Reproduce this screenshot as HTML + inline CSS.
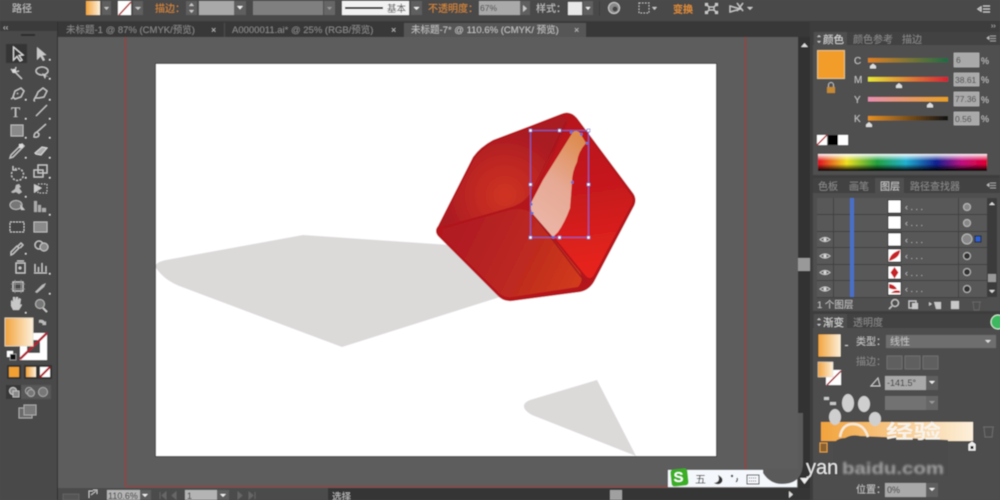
<!DOCTYPE html>
<html><head><meta charset="utf-8"><style>
html,body{margin:0;padding:0;width:1000px;height:500px;overflow:hidden;background:#4a4a4a}
svg{display:block}
text{font-family:"Liberation Sans","Noto Sans CJK SC",sans-serif}
.t{fill:#c4c4c4;font-size:10px}
.d{fill:#8a8a8a;font-size:10px}
.o{fill:#d98a35;font-size:10px}
.i{fill:none;stroke:#c8c8c8;stroke-width:1.3}
.f{fill:#c8c8c8}
</style></head><body>
<svg width="1000" height="500" viewBox="0 0 1000 500" xmlns="http://www.w3.org/2000/svg">
<defs>
<linearGradient id="og" x1="0" x2="1" y1="0" y2="0"><stop offset="0" stop-color="#f2a33c"/><stop offset="1" stop-color="#fdf0dc"/></linearGradient>
<linearGradient id="spec" x1="0" x2="1" y1="0" y2="0"><stop offset="0" stop-color="#e01020"/><stop offset=".17" stop-color="#f0e020"/><stop offset=".35" stop-color="#20a040"/><stop offset=".52" stop-color="#20b0d0"/><stop offset=".7" stop-color="#102090"/><stop offset=".85" stop-color="#c01080"/><stop offset="1" stop-color="#e00030"/></linearGradient>
<linearGradient id="specw" x1="0" x2="0" y1="0" y2="1"><stop offset="0" stop-color="#fff" stop-opacity=".95"/><stop offset=".4" stop-color="#fff" stop-opacity="0"/><stop offset=".6" stop-color="#000" stop-opacity="0"/><stop offset="1" stop-color="#000"/></linearGradient>
<radialGradient id="f1" gradientUnits="userSpaceOnUse" cx="505" cy="195" r="65"><stop offset="0" stop-color="#d03420"/><stop offset=".6" stop-color="#bb2522"/><stop offset="1" stop-color="#a81a20"/></radialGradient>
<linearGradient id="f2" gradientUnits="userSpaceOnUse" x1="460" y1="225" x2="580" y2="285"><stop offset="0" stop-color="#b01c20"/><stop offset=".55" stop-color="#bd2a20"/><stop offset="1" stop-color="#d23c1c"/></linearGradient>
<linearGradient id="f3" gradientUnits="userSpaceOnUse" x1="570" y1="130" x2="590" y2="265"><stop offset="0" stop-color="#b8141c"/><stop offset=".5" stop-color="#c81a1e"/><stop offset="1" stop-color="#e6241f"/></linearGradient>
<linearGradient id="hl" x1="0.7" x2="0.3" y1="0" y2="1"><stop offset="0" stop-color="#de8c50"/><stop offset=".5" stop-color="#e6a994"/><stop offset="1" stop-color="#ebb6a8"/></linearGradient>
<linearGradient id="s1" x1="0" x2="1"><stop offset="0" stop-color="#e08020"/><stop offset="1" stop-color="#1f6a45"/></linearGradient>
<linearGradient id="s2" x1="0" x2="1"><stop offset="0" stop-color="#e8e830"/><stop offset="1" stop-color="#d82030"/></linearGradient>
<linearGradient id="s3" x1="0" x2="1"><stop offset="0" stop-color="#e890b0"/><stop offset="1" stop-color="#e8a020"/></linearGradient>
<linearGradient id="s4" x1="0" x2="1"><stop offset="0" stop-color="#e89020"/><stop offset="1" stop-color="#111"/></linearGradient>
<filter id="b" x="-5%" y="-5%" width="110%" height="110%"><feGaussianBlur stdDeviation="0.45"/></filter>
<filter id="b2" x="-10%" y="-30%" width="120%" height="160%"><feGaussianBlur stdDeviation="1.1"/></filter>
</defs>
<g filter="url(#b)">
<rect width="1000" height="500" fill="#494949"/>
<rect x="0" y="21" width="1000" height="1" fill="#3a3a3a"/>
<rect x="58" y="37" width="740" height="451" fill="#5d5d5d"/>
<rect x="57" y="22" width="753" height="15" fill="#383838"/>
<rect x="404" y="23" width="182" height="14" fill="#565656"/>
<rect x="224" y="23" width="1" height="14" fill="#4c4c4c"/>
<text x="66" y="33" class="d" style="font-size:9.5px">未标题-1 @ 87% (CMYK/预览)</text>
<text x="211" y="33" class="t" style="font-size:9px">×</text>
<text x="232" y="33" class="d" style="font-size:9.5px">A0000011.ai* @ 25% (RGB/预览)</text>
<text x="391" y="33" class="t" style="font-size:9px">×</text>
<text x="411" y="33" class="t" style="font-size:9.5px">未标题-7* @ 110.6% (CMYK/ 预览)</text>
<text x="574" y="33" class="t" style="font-size:9px">×</text>
<rect x="155" y="63" width="562" height="394" fill="#3f3f3f"/>
<rect x="156" y="64" width="560" height="392" fill="#fff"/>
<path d="M125.500 37V486.500H745.500V37" fill="none" stroke="#96403f" stroke-width="1.300"/>
<path d="M156 265Q157 262 166 260L303 235L450 245L500 297L342 347L182 287Q165 281 156 268Z" fill="#dcd9d9"/>
<path d="M597 380L636 456L532 415Q523 410 524 405Q525 402 530 400Z" fill="#dcd9d9"/>
<!-- cube -->
<path d="M561 114Q570 110 577 118L633 193Q638 200 633 208L595 280Q590 290 580 292L512 301Q503 302 497 295L438 236Q434 231 438 226L473 157Q480 147 493 140L530 126Z" fill="#b5161d"/>
<path d="M562 116L568 121Q555 150 531 195Q522 205 510 208L443 226L440 226L475 158Q482 149 494 142L531 128Z" fill="url(#f1)"/>
<path d="M443 229L510 210Q522 207 532 213L580 272Q584 280 578 287L512 297Q504 298 499 293L442 236Z" fill="url(#f2)"/>
<path d="M570 121Q574 117 577 121L630 194Q635 200 630 207L594 275Q590 281 585 275L534 212Q531 205 533 198Z" fill="url(#f3)"/>
<path d="M443 228L510 208Q522 205 530 195L566 122" fill="none" stroke="#a81820" stroke-width="1.200" opacity=".7"/>
<path d="M532 213L586 283" fill="none" stroke="#a51a20" stroke-width="1.500"/>
<path d="M573 132Q576 129 580 133L586 143Q578 152 577 162Q572 172 572 182L570 208Q565 222 558 232L553 237L532 213Q530 207 531 203L543 180L563 148Z" fill="url(#hl)"/>
<rect x="530.500" y="130.500" width="58" height="107" fill="none" stroke="#6a5fc0" stroke-width="1"/>
<g fill="#fff" stroke="#6a5fc0" stroke-width=".6"><rect x="529" y="129" width="3" height="3"/><rect x="558" y="129" width="3" height="3"/><rect x="587" y="129" width="3" height="3"/><rect x="529" y="183" width="3" height="3"/><rect x="587" y="183" width="3" height="3"/><rect x="529" y="236" width="3" height="3"/><rect x="558" y="236" width="3" height="3"/><rect x="587" y="236" width="3" height="3"/></g>
<g fill="#6a70d0"><rect x="570" y="131" width="2.500" height="2.500"/><rect x="580" y="133" width="2.500" height="2.500"/><rect x="586" y="142" width="2.500" height="2.500"/><rect x="571" y="181" width="2.500" height="2.500"/><rect x="530" y="203" width="2.500" height="2.500"/><rect x="531" y="212" width="2.500" height="2.500"/><rect x="552" y="236" width="2.500" height="2.500"/></g>
<!-- options bar -->
<text x="12" y="12" class="t">路径</text>
<rect x="86" y="1" width="14" height="14" fill="url(#og)"/>
<rect x="102" y="1" width="9" height="14" fill="#5e5e5e"/><path d="M104 7h5l-2.500 3z" class="f"/>
<rect x="118" y="1" width="13" height="14" fill="#fff"/><path d="M119 15L131 2" stroke="#b02020" stroke-width="1.500"/>
<rect x="133" y="1" width="10" height="14" fill="#5e5e5e"/><path d="M135 7h6l-3 3z" class="f"/>
<text x="155" y="12" class="o">描边：</text>
<rect x="186" y="1" width="11" height="14" fill="#5e5e5e"/><path d="M189 6h5l-2.500-3zM189 10h5l-2.500 3z" class="f"/>
<rect x="199" y="1" width="35" height="14" fill="#a9a9a9"/>
<rect x="234" y="1" width="12" height="14" fill="#5e5e5e"/><path d="M237 6h6l-3 3.500z" fill="#eee"/>
<rect x="253" y="1" width="70" height="14" fill="#7f7f7f"/>
<rect x="324" y="1" width="11" height="14" fill="#666"/><path d="M327 7h5l-2.500 3z" fill="#999"/>
<rect x="342" y="1" width="67" height="14" fill="#f2f2f2"/><rect x="345" y="7" width="38" height="2" fill="#111"/>
<text x="387" y="12" fill="#444" style="font-size:9.500px">基本</text>
<rect x="411" y="1" width="11" height="14" fill="#5e5e5e"/><path d="M413.500 7h6l-3 3z" fill="#eee"/>
<text x="428" y="12" class="o">不透明度：</text>
<rect x="479" y="1" width="41" height="14" fill="#a9a9a9"/>
<text x="480" y="11" fill="#444" style="font-size:8.500px">67%</text>
<rect x="520" y="1" width="10" height="14" fill="#5e5e5e"/><path d="M523 5l4 3.500-4 3.500z" class="f"/>
<text x="536" y="12" class="t">样式：</text>
<rect x="568" y="2" width="14" height="13" fill="#e8e8e8"/>
<rect x="583" y="1" width="10" height="14" fill="#5e5e5e"/><path d="M585.500 7h5l-2.500 3z" fill="#eee"/>
<rect x="599" y="1" width="1" height="15" fill="#3c3c3c"/>
<circle cx="614" cy="8" r="5.500" fill="#8a8a8a" stroke="#ccc"/><circle cx="615" cy="9" r="2.500" fill="#444"/>
<rect x="639" y="3" width="10" height="10" fill="none" stroke="#bbb" stroke-dasharray="1.500 1.500"/>
<path d="M652 7h5l-2.500 3z" class="f"/>
<text x="673" y="13" class="o" style="font-weight:bold;font-size:10px">变换</text>
<path d="M707 5l2 2h5l2-2M707 12l2-2h5l2 2M709 7v3M714 7v3" class="i"/><rect x="705" y="3" width="3" height="3" class="f"/><rect x="715" y="3" width="3" height="3" class="f"/><rect x="705" y="11" width="3" height="3" class="f"/><rect x="715" y="11" width="3" height="3" class="f"/>
<path d="M730 6l10 3-10 3zM737 3l6 8M743 3l-6 8" class="i"/>
<path d="M747 7h6l-3 3z" class="f"/>
<path d="M978 9l3-2v4zM983 6h7M983 9h7M983 12h7" class="i" stroke-width=".8"/>
<!-- toolbar -->
<rect x="0" y="22" width="57" height="478" fill="#494949"/>
<rect x="57" y="22" width="1" height="478" fill="#2f2f2f"/>
<rect x="0" y="22" width="57" height="9" fill="#3a3a3a"/>
<text x="3" y="30" class="t" style="font-size:8px">‹‹</text>
<rect x="21" y="34" width="14" height="2" fill="#2c2c2c"/>
<rect x="6" y="44" width="21" height="19" fill="#343434"/>
<path d="M13.500 47L13.500 60L17 56.500L20 61L22 60L19 55.500L23 55Z" fill="none" stroke="#ddd" stroke-width="1.200"/>
<path d="M37 47L37 60L40.500 56.500L43 61L45 60L42.500 55.500L46.500 55Z" fill="#c8c8c8"/>
<path d="M11 69l2 2M16 67l-1 4M19 71l-4 1M22 79l-7-7" class="i"/><circle cx="14" cy="71" r="2" fill="#ddd"/>
<ellipse cx="42" cy="71" rx="6" ry="4" class="i"/><path d="M42 73l3 6 1-3 3 1z" class="f"/>
<path d="M13 97l2-6 6-3 3 3-3 6-6 2zM18 93l-1 1M11 99l3-2" class="i"/>
<path d="M35 98q2-3 3-6l5-4 4 3-3 6-5 1zM35 98q-2 3 0 3" class="i"/>
<text x="11" y="117" fill="#ccc" style="font-family:'Liberation Serif',serif;font-size:15px">T</text>
<path d="M36 116L47 105" stroke="#ccc" stroke-width="1.200"/>
<rect x="11" y="125" width="12" height="11" fill="#8a8a8a" stroke="#bbb"/>
<path d="M46 124l-9 8M34 137q5 1 5-3l-2-2q-3 1-3 5z" class="i"/>
<path d="M11 155l9-9 2 2-9 9-3 1zM20 146l2-2 2 2-2 2" class="i"/><rect x="19" y="144" width="4" height="4" fill="#ddd"/>
<path d="M35 153l7-6 5 1-6 7-5-1z" fill="#aaa" stroke="#ddd"/>
<path d="M12 172a6 6 0 1 0 3-3" class="i" stroke-dasharray="2 1.500"/><path d="M13 166v4h4" class="i"/>
<rect x="34" y="170" width="9" height="7" class="i"/><rect x="38" y="165" width="9" height="8" class="i"/>
<path d="M11 192l4-3 1-4 3-1 2 3-2 1 3 4-3 2-3-2-3 1z" fill="#bbb"/>
<path d="M34 184l8 4-8 5z" fill="#ccc"/><rect x="38" y="184" width="9" height="9" fill="none" stroke="#bbb" stroke-dasharray="1.500 1.500"/>
<ellipse cx="16" cy="205" rx="6" ry="4.500" fill="#777" stroke="#bbb"/><path d="M20 204l5 6h-4z" class="f"/>
<path d="M34 201h3v11h-3zM38 205h3v7h-3zM42 208h4v4h-4z" fill="#aaa"/>
<rect x="10" y="222" width="14" height="10" fill="#444" stroke="#ccc" stroke-dasharray="2 1"/>
<rect x="34" y="222" width="13" height="10" fill="#8a8a8a" stroke="#bbb"/>
<path d="M11 252l6-6 2 2-6 6-2 1zM18 246l3-3 2 2-3 3" class="i"/>
<circle cx="39" cy="245" r="4" class="i"/><circle cx="44" cy="247" r="4" fill="#888" stroke="#ccc"/>
<rect x="16" y="263" width="9" height="10" class="i"/><circle cx="20" cy="268" r="1.500" class="f"/><path d="M17 261h7" class="i"/>
<path d="M35 272v-8M38.500 272v-5M42 272v-9M46 272v-6M34 273h13" class="i" stroke-width="1.500"/>
<rect x="13" y="282" width="10" height="9" class="i"/><path d="M11 284h14M11 289h14M15 280v13M21 280v13" stroke="#999" stroke-width=".8"/>
<path d="M35 292l7-7 4-2-2 4-7 6z" fill="#bbb"/>
<path d="M11 306v-5l1-1 1 2v-5l2 0 0 3 1-3 2 0v3l1-2 2 1-1 6 1-1 1 1-3 5h-6z" fill="#c8c8c8"/>
<circle cx="40" cy="304" r="4.500" fill="#777" stroke="#bbb"/><path d="M43 308l4 4" stroke="#ccc" stroke-width="1.800"/>
<g fill="#ddd"><rect x="49" y="59" width="1.500" height="1.500"/><rect x="49" y="78" width="1.500" height="1.500"/><rect x="25" y="99" width="1.500" height="1.500"/><rect x="49" y="99" width="1.500" height="1.500"/><rect x="25" y="118" width="1.500" height="1.500"/><rect x="49" y="118" width="1.500" height="1.500"/><rect x="25" y="137" width="1.500" height="1.500"/><rect x="49" y="137" width="1.500" height="1.500"/><rect x="25" y="157" width="1.500" height="1.500"/><rect x="49" y="157" width="1.500" height="1.500"/><rect x="25" y="177" width="1.500" height="1.500"/><rect x="49" y="177" width="1.500" height="1.500"/><rect x="25" y="196" width="1.500" height="1.500"/><rect x="49" y="214" width="1.500" height="1.500"/><rect x="25" y="253" width="1.500" height="1.500"/><rect x="49" y="273" width="1.500" height="1.500"/><rect x="49" y="293" width="1.500" height="1.500"/><rect x="25" y="312" width="1.500" height="1.500"/></g>
<rect x="20" y="333" width="27" height="27" fill="#fff"/><rect x="27" y="340" width="13" height="13" fill="#4a4a4a"/>
<path d="M20 359L47 333" stroke="#b02030" stroke-width="2.500"/>
<rect x="5" y="318" width="28" height="28" fill="url(#og)" stroke="#e8dcc8" stroke-width=".8"/>
<path d="M39 320q4-1 6 2l1-1v4h-4l1-1q-2-2-4-1z" fill="#bbb"/>
<rect x="7" y="351" width="6" height="6" fill="#fff"/><rect x="10" y="354" width="6" height="6" fill="#111" stroke="#ccc" stroke-width=".6"/>
<rect x="7" y="365" width="14" height="14" fill="#333"/><rect x="9" y="367" width="10" height="10" fill="#f2a033"/>
<rect x="24" y="365" width="14" height="14" fill="#333"/><rect x="26" y="367" width="10" height="10" fill="url(#og)"/>
<rect x="38" y="365" width="14" height="14" fill="#333"/><rect x="40" y="367" width="10" height="10" fill="#fff"/><path d="M40 377L50 367" stroke="#b01020" stroke-width="2"/>
<rect x="6" y="385" width="15" height="14" fill="#383838"/><rect x="21" y="385" width="30" height="14" fill="#585858"/>
<circle cx="13" cy="391" r="3.500" fill="#888" stroke="#ccc"/><rect x="13" y="391" width="6" height="6" fill="#888" stroke="#ccc" stroke-width=".8"/>
<circle cx="29" cy="391" r="3.500" fill="none" stroke="#aaa"/><circle cx="31" cy="393" r="3.500" fill="#777" stroke="#aaa"/>
<circle cx="43" cy="392" r="4.500" fill="#777" stroke="#aaa"/>
<rect x="19" y="408" width="13" height="10" fill="#6a6a6a" stroke="#aaa"/><rect x="24" y="405" width="12" height="10" fill="#7a7a7a" stroke="#aaa"/>
<!-- vertical scroll -->
<rect x="798" y="37" width="14" height="451" fill="#333"/>
<rect x="798" y="258" width="12" height="13" fill="#999"/>
<path d="M801 47h7l-3.500-4z" fill="#ddd"/>
<rect x="810" y="22" width="190" height="478" fill="#3d3d3d"/>
<!-- colour panel -->
<rect x="813" y="32" width="187" height="143" fill="#4f4f4f"/>
<rect x="813" y="32" width="187" height="13" fill="#424242"/>
<rect x="814" y="32" width="33" height="14" fill="#4f4f4f"/>
<text x="823" y="43" fill="#ddd" style="font-size:10.500px">颜色</text>
<path d="M817 37h4l-2-2zM817 41h4l-2 2z" class="f"/>
<text x="853" y="43" class="d">颜色参考</text>
<text x="902" y="43" class="d">描边</text>
<path d="M987 38l2-1.500v3zM990 36h6M990 38.500h6M990 41h6" stroke="#bbb" stroke-width=".7" fill="#bbb"/>
<text x="991" y="28" fill="#bbb" style="font-size:7px">››</text>
<rect x="817.500" y="50.500" width="27" height="28" fill="#f29c2a" stroke="#e8d0a0" stroke-width=".8"/>
<rect x="827" y="87" width="8" height="6" fill="#c58a30"/><path d="M828.500 87v-2a2.500 2.500 0 0 1 5 0v2" fill="none" stroke="#bbb"/>
<g class="t" style="font-size:10px"><text x="854" y="64">C</text><text x="854" y="83">M</text><text x="854" y="103">Y</text><text x="854" y="122">K</text></g>
<rect x="868" y="58" width="80" height="4.500" fill="url(#s1)"/><rect x="868" y="77" width="80" height="4.500" fill="url(#s2)"/><rect x="868" y="97" width="80" height="4.500" fill="url(#s3)"/><rect x="868" y="116" width="80" height="4.500" fill="url(#s4)"/>
<path d="M873 63.500l3 2.500v2.500h-6v-2.500z M899 83l3 2.500v2.500h-6v-2.500z M930 102.500l3 2.500v2.500h-6v-2.500z M869 122l3 2.500v2.500h-6v-2.500z" fill="#ddd"/>
<g fill="#a9a9a9" stroke="#ccc" stroke-width=".5"><rect x="954" y="53" width="25" height="14"/><rect x="954" y="73" width="25" height="13"/><rect x="954" y="92" width="25" height="14"/><rect x="954" y="112" width="25" height="13"/></g>
<g fill="#444" style="font-size:8.500px"><text x="956" y="63">6</text><text x="955" y="83">38.61</text><text x="955" y="102">77.36</text><text x="955" y="122">0.56</text></g>
<g class="t" style="font-size:9px"><text x="981" y="64">%</text><text x="981" y="83">%</text><text x="981" y="103">%</text><text x="981" y="122">%</text></g>
<rect x="817" y="135" width="10" height="10" fill="#fff"/><path d="M817 145L827 135" stroke="#b01020" stroke-width="1.300"/>
<rect x="828" y="135" width="10" height="10" fill="#000"/><rect x="838" y="135" width="10" height="10" fill="#fff"/>
<rect x="818" y="154" width="169" height="17" fill="url(#spec)"/><rect x="818" y="154" width="169" height="17" fill="url(#specw)"/>
<!-- layers panel -->
<rect x="813" y="178" width="187" height="133" fill="#4f4f4f"/>
<rect x="813" y="178" width="187" height="15" fill="#424242"/>
<rect x="875" y="178" width="29" height="15" fill="#4f4f4f"/>
<text x="818" y="190" class="d">色板</text><text x="849" y="190" class="d">画笔</text><text x="880" y="190" fill="#ccc" style="font-size:10px">图层</text><text x="910" y="190" class="d">路径查找器</text>
<path d="M987 185l2-1.500v3zM990 183h6M990 185.500h6M990 188h6" stroke="#bbb" stroke-width=".7" fill="#bbb"/>
<rect x="817" y="198" width="170" height="99" fill="#585858"/>
<g fill="#3f3f3f"><rect x="817" y="214" width="170" height="1"/><rect x="817" y="231" width="170" height="1"/><rect x="817" y="247" width="170" height="1"/><rect x="817" y="264" width="170" height="1"/><rect x="817" y="280" width="170" height="1"/><rect x="817" y="297" width="170" height="1"/><rect x="833" y="198" width="1" height="99"/><rect x="958" y="198" width="1" height="99"/></g>
<rect x="850" y="198" width="4" height="99" fill="#4a6fc8"/>
<g fill="#fff" stroke="#222" stroke-width=".8"><rect x="888" y="200" width="13" height="13"/><rect x="888" y="216" width="13" height="13"/><rect x="888" y="233" width="13" height="13"/><rect x="888" y="249" width="13" height="13"/><rect x="888" y="266" width="13" height="13"/><rect x="888" y="282" width="13" height="13"/></g>
<path d="M889 261Q890 253 900 250Q900 258 889 261z" fill="#c82025"/><path d="M894.500 267l4 5.500-4 6-4-6z" fill="#c82025"/><path d="M889 284q5 0 8 5q-5 1-8-1zM891 293q4-4 9-2l0 2z" fill="#c82025"/>
<g fill="#bdbdbd" style="font-size:9px"><text x="905" y="210">‹ . . .</text><text x="905" y="226">‹ . . .</text><text x="905" y="243">‹ . . .</text><text x="905" y="259">‹ . . .</text><text x="905" y="276">‹ . . .</text><text x="905" y="292">‹ . . .</text></g>
<g fill="#333" stroke="#bbb"><circle cx="967" cy="207" r="3.500" fill="#888"/><circle cx="967" cy="223" r="3.500" fill="#888"/><circle cx="967" cy="239" r="5" fill="#888"/><circle cx="967" cy="256" r="3.500"/><circle cx="967" cy="272" r="3.500"/><circle cx="967" cy="289" r="3.500"/></g>
<rect x="975" y="236" width="6" height="6" fill="#2f5fd0" stroke="#111" stroke-width=".8"/>
<g fill="none" stroke="#ccc"><path d="M820 239.500q5-4 10 0q-5 4-10 0zM820 256q5-4 10 0q-5 4-10 0zM820 272.500q5-4 10 0q-5 4-10 0zM820 289q5-4 10 0q-5 4-10 0z"/></g>
<g fill="#ddd"><circle cx="825" cy="239.500" r="1.500"/><circle cx="825" cy="256" r="1.500"/><circle cx="825" cy="272.500" r="1.500"/><circle cx="825" cy="289" r="1.500"/></g>
<rect x="987" y="198" width="10" height="99" fill="#3a3a3a"/><rect x="988" y="274" width="8" height="8" fill="#999"/>
<path d="M989 205h6l-3-3zM989 290h6l-3 3z" fill="#ddd"/>
<text x="817" y="308" class="t" style="font-size:9.500px">1 个图层</text>
<circle cx="895" cy="303" r="3.500" class="i"/><path d="M892 306l-3 3" class="i"/>
<rect x="909" y="301" width="7" height="7" class="i"/><rect x="912" y="303" width="6" height="6" class="f"/>
<path d="M929 302l3 2-3 2zM934 302h7v7h-5z" class="f"/>
<path d="M951 301h8v8h-8z" class="f"/><path d="M973 302h7l-1 8h-5zM972 302h9" fill="none" stroke="#666"/>
<!-- gradient panel -->
<rect x="813" y="314" width="187" height="186" fill="#4d4d4d"/>
<rect x="813" y="314" width="187" height="14" fill="#424242"/>
<rect x="814" y="314" width="33" height="14" fill="#4d4d4d"/>
<text x="823" y="326" fill="#ddd" style="font-size:10.500px">渐变</text>
<path d="M817 320h4l-2-2zM817 324h4l-2 2z" class="f"/>
<text x="853" y="326" class="d">透明度</text>
<circle cx="998" cy="322" r="7" fill="#3cb860" stroke="#d8f0d8"/>
<rect x="818" y="334" width="23" height="23" fill="url(#og)" stroke="#333" stroke-width=".6"/>
<rect x="845" y="345" width="3" height="1" fill="#ccc"/>
<rect x="826" y="370" width="15" height="15" fill="#fff"/><path d="M827 385L841 371" stroke="#a01828" stroke-width="1.500"/><rect x="818" y="362" width="15" height="15" fill="url(#og)" stroke="#ddd" stroke-width=".5"/>
<text x="856" y="345" class="t">类型：</text>
<rect x="886" y="335" width="110" height="13" fill="#6e6e6e"/><text x="890" y="345" class="t">线性</text><path d="M985 340h6l-3 3z" fill="#ddd"/>
<text x="856" y="365" class="d">描边：</text>
<g fill="#5f5f5f" stroke="#707070"><rect x="887" y="356" width="15" height="13"/><rect x="905" y="356" width="15" height="13"/><rect x="923" y="356" width="15" height="13"/></g>
<path d="M871 386h9l-2-8z" fill="none" stroke="#ccc"/>
<rect x="885" y="376" width="41" height="14" fill="#a9a9a9"/><text x="887" y="386" fill="#333" style="font-size:9px">-141.5°</text>
<rect x="926" y="376" width="12" height="14" fill="#5e5e5e"/><path d="M929 381h6l-3 3z" fill="#eee"/>
<rect x="885" y="396" width="41" height="14" fill="#727272"/><rect x="926" y="396" width="12" height="14" fill="#666"/><path d="M929 401h6l-3 3z" fill="#999"/>
<path d="M824 397h5v3h-5zM830 402h6v3h-6z" class="f"/>
<!-- gradient bar -->
<rect x="821" y="422" width="152" height="19" fill="url(#og)"/>
<rect x="820" y="443" width="7" height="9" fill="#8a6030" stroke="#e8a040"/>
<path d="M972 441l4 3v7h-8v-7z" fill="#eee" stroke="#333" stroke-width=".6"/><rect x="970.500" y="446" width="3" height="3" fill="#222"/>
<path d="M984 427h9l-1 10h-7zM983 427h11" fill="none" stroke="#6a6a6a" stroke-width="1.200"/>
<!-- status bar -->
<rect x="58" y="488" width="752" height="12" fill="#343434"/>
<rect x="58" y="488" width="270" height="12" fill="#4c4c4c"/>
<rect x="63" y="494" width="16" height="6" fill="#555" stroke="#777" stroke-width=".5"/>
<path d="M89 498v-7h4M91 495l5-4M93 490h4v4" fill="none" stroke="#c4c4c4"/>
<rect x="107" y="490" width="33" height="10" fill="#b4b4b4"/><text x="108" y="499" fill="#333" style="font-size:9px">110.6%</text>
<rect x="140" y="490" width="11" height="10" fill="#5e5e5e"/><path d="M142 494h6l-3 3z" fill="#eee"/>
<path d="M160 492v7M166 492l-4 3.500 4 3.500zM176 492l-4 3.500 4 3.500z" fill="#666" stroke="#666"/>
<rect x="185" y="490" width="32" height="10" fill="#b4b4b4"/><text x="187" y="499" fill="#333" style="font-size:9px">1</text>
<rect x="217" y="490" width="12" height="10" fill="#5e5e5e"/><path d="M220 494h6l-3 3z" fill="#eee"/>
<path d="M238 492l4 3.500-4 3.500zM249 492l4 3.500-4 3.500zM255 492v7" fill="#666" stroke="#666"/>
<text x="332" y="500" class="t" style="font-size:9.500px">选择</text>
<rect x="610" y="490" width="12" height="10" fill="#a0a0a0"/>
<path d="M789 491l4 3.500-4 3.500z" fill="#ddd"/>
<!-- IME bar -->
<rect x="668" y="470" width="129" height="17" fill="#f4f7fb"/>
<rect x="671" y="469" width="17" height="17" rx="3" fill="#39b020" transform="rotate(-6 679 478)"/>
<text x="673.500" y="482" fill="#fff" style="font-size:15px;font-weight:bold">S</text>
<text x="695" y="483" fill="#333" style="font-size:11px">五</text>
<path d="M718 475q3 7-4 8q5 3 8-1q2-4-4-7z" fill="#333"/>
<circle cx="732" cy="476" r="1.200" fill="#333"/><path d="M737 478q1 2-1 4" stroke="#333" fill="none" stroke-width="1.200"/>
<rect x="747" y="475" width="12" height="9" fill="none" stroke="#333"/><path d="M749 478h8M749 481h8" stroke="#333" stroke-dasharray="1 1"/>
<!-- blob over scrollbar and IME -->
<path d="M798 413H803V462Q803 484 782 484Q770 484 763 473V469H798Z" fill="#5a5a5a"/>
<path d="M800 478h9l-4.500 6z" fill="#eee"/>
<!-- watermark -->
<g fill="#cfcfcf"><ellipse cx="848" cy="403" rx="6" ry="9"/><ellipse cx="864" cy="404" rx="6" ry="8"/><ellipse cx="835" cy="417" rx="6" ry="8"/><ellipse cx="875" cy="419" rx="6" ry="7"/></g>
<path d="M833 445Q836 438 845 438Q852 434 860 436L948 440V476H833Z" fill="#4c4c4c"/>
<path d="M840 437q2-13 13-13q11 0 15 13" fill="none" stroke="#f4ead8" stroke-width="2.500"/>
<text transform="translate(886,438) scale(1.450,1)" fill="#f8f3ea" style="font-size:19px;font-weight:bold">经验</text>
<text x="806" y="474" fill="#e8e8e8" style="font-size:20px">yan</text>
<text x="842" y="474" fill="#a0a0a0" filter="url(#b2)" textLength="102" lengthAdjust="spacingAndGlyphs" style="font-size:17px;font-weight:bold">baidu.com</text>
<text x="856" y="493" class="t">位置：</text>
<rect x="885" y="483" width="41" height="14" fill="#a9a9a9"/><text x="887" y="493" fill="#333" style="font-size:9px">0%</text>
<rect x="926" y="483" width="12" height="14" fill="#5e5e5e"/><path d="M929 488h6l-3 3z" fill="#eee"/>
</g>
</svg>
</body></html>
